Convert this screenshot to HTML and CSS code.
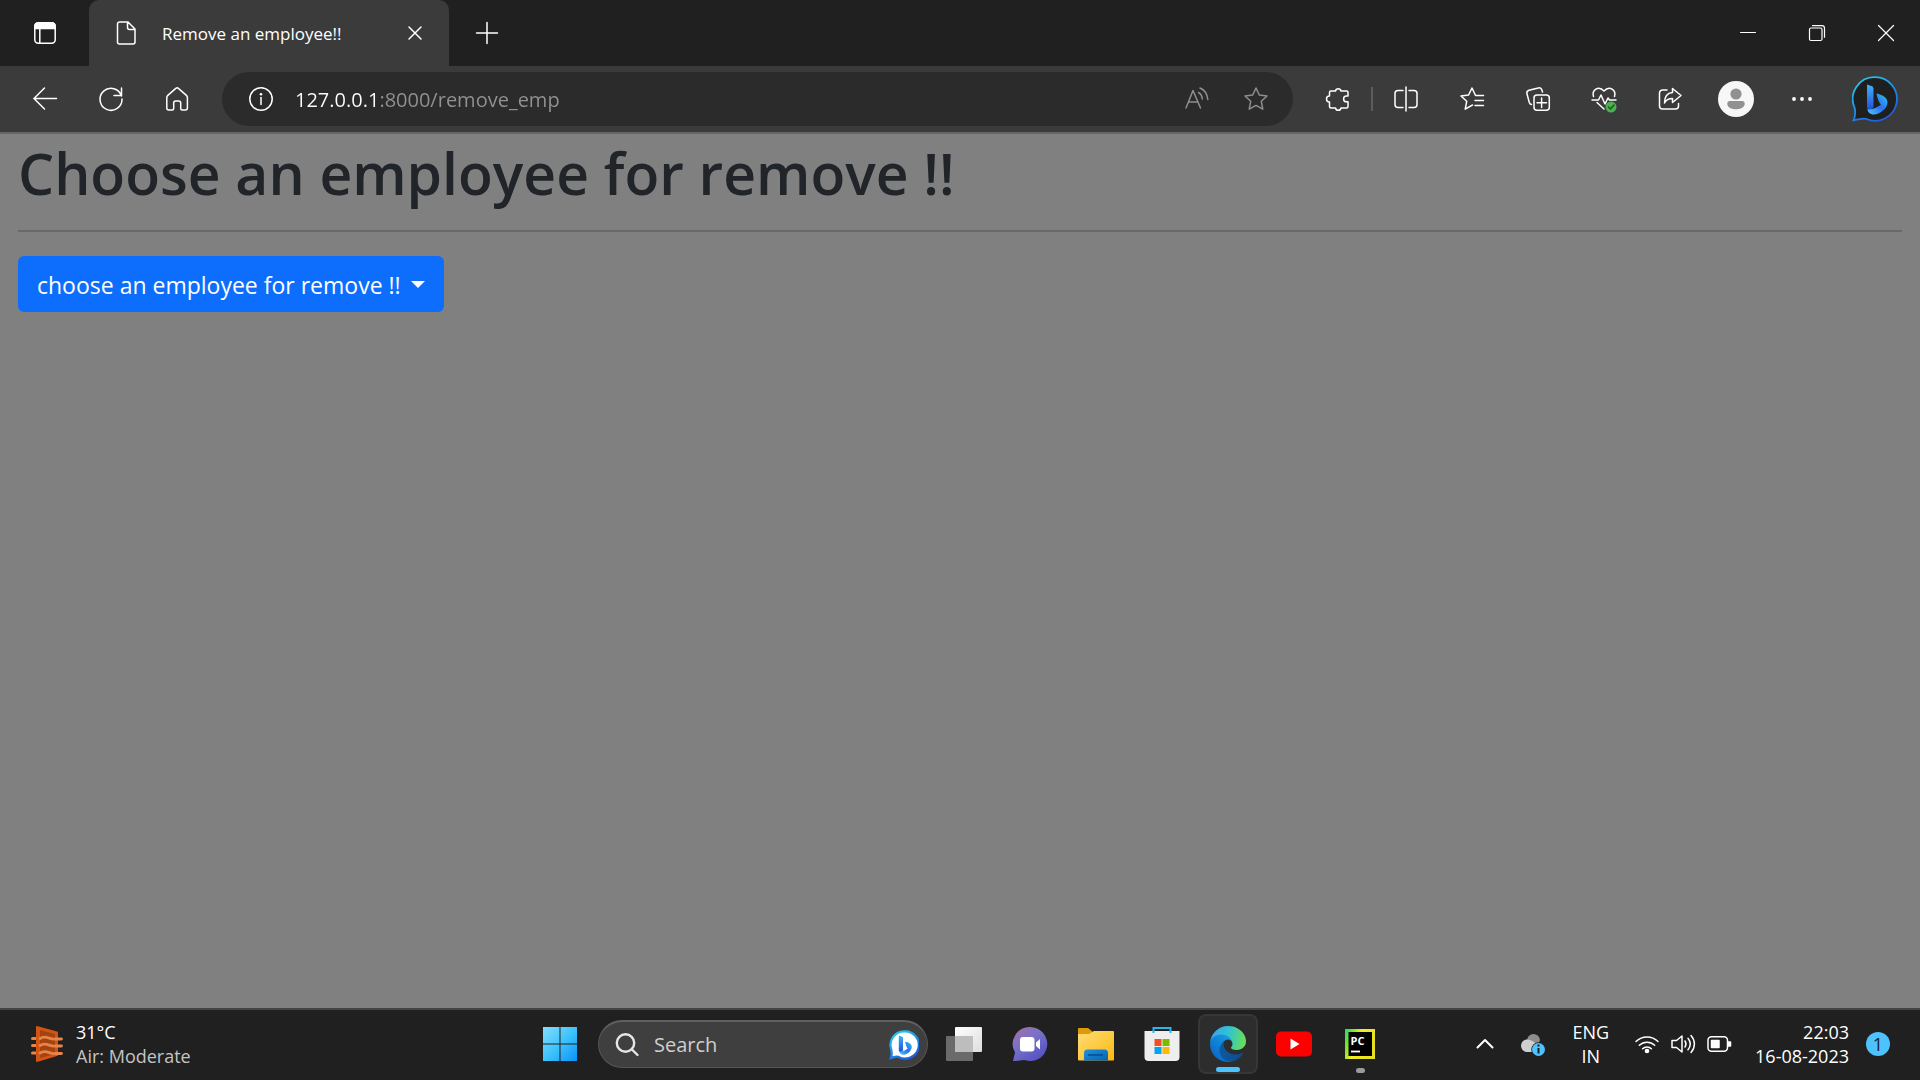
FILE: index.html
```html
<!DOCTYPE html>
<html lang="en">
<head>
<meta charset="utf-8">
<meta name="viewport" content="width=device-width, initial-scale=1">
<title>Remove an employee!!</title>
<link rel="stylesheet" href="styles.css">
</head>
<body>
<header class="browser">
  <div class="tab-strip">
    <button class="tab-actions" aria-label="Tab actions menu">
      <svg class="ico-24" viewBox="0 0 24 24"><rect x="1.800" y="1.800" width="20.400" height="20.400" rx="3.500"/><path class="solid" d="M2 7.500V5a3 3 0 0 1 3-3h14a3 3 0 0 1 3 3v2.500z"/><path d="M6.800 7v15"/></svg>
    </button>
    <div class="tab">
      <svg class="ico-24" viewBox="0 0 24 24"><path d="M5.500 1H14l7 7v13a2 2 0 0 1-2 2H5.500a2 2 0 0 1-2-2V3a2 2 0 0 1 2-2zM13.500 1v5.500a2 2 0 0 0 2 2H21"/></svg>
      <span class="tab-title">Remove an employee!!</span>
      <button class="tab-close" aria-label="Close tab"><svg class="ico-24" viewBox="0 0 24 24"><path d="M6 6l12 12M18 6L6 18"/></svg></button>
    </div>
    <button class="tab-new" aria-label="New tab"><svg class="ico-24" viewBox="0 0 24 24"><path d="M12 1.500v21M1.500 12h21"/></svg></button>
    <div class="window-controls">
      <button aria-label="Minimize"><svg class="ico-24 crisp" viewBox="0 0 24 24"><path d="M4.500 11.500h15"/></svg></button>
      <button aria-label="Restore"><svg class="ico-24 thin" viewBox="0 0 24 24"><rect x="4.500" y="7" width="12.500" height="12.500" rx="1.500"/><path d="M7.500 4.700h9.500a2.500 2.500 0 0 1 2.500 2.500v9"/></svg></button>
      <button aria-label="Close"><svg class="ico-24 thin" viewBox="0 0 24 24"><path d="M4.500 4.500l15 15M19.500 4.500l-15 15"/></svg></button>
    </div>
  </div>
  <nav class="toolbar" aria-label="Browser toolbar">
    <div class="tool-group">
      <button class="tool" aria-label="Back"><svg class="ico-24" viewBox="0 0 24 24"><path d="M23.500 11.500H.800M11.500 1L1 11.500 11.500 22"/></svg></button>
      <button class="tool" aria-label="Refresh"><svg class="ico-24" viewBox="0 0 24 24"><path d="M22.500 9A11 11 0 1 0 23 12M22.500 1v7.500H15"/></svg></button>
      <button class="tool" aria-label="Home"><svg class="ico-24" viewBox="0 0 24 24"><path d="M1.800 10.500a3 3 0 0 1 1-2.100l8-7a2 2 0 0 1 2.600 0l8 7a3 3 0 0 1 1 2.100V21a2 2 0 0 1-2 2h-3.200a1.500 1.500 0 0 1-1.500-1.500V16a2 2 0 0 0-2-2h-3a2 2 0 0 0-2 2v5.500A1.500 1.500 0 0 1 7.200 23H3.800a2 2 0 0 1-2-2z"/></svg></button>
    </div>
    <div class="address">
      <svg class="ico-24" viewBox="0 0 24 24"><circle cx="12" cy="12" r="11.200"/><path d="M12 10.500v7"/><circle class="solid-dot" cx="12" cy="7.300" r="1.300"/></svg>
      <input class="url" type="text" aria-label="Address" value="127.0.0.1:8000/remove_emp">
      <button class="muted" aria-label="Read aloud"><svg class="ico-24" viewBox="0 0 24 24"><path d="M1 21L8 3.500 15.500 21M3.500 15h9.500M13.500 5.500c2.200 1.200 3.500 3.200 3.800 6.500M15 1c4.500 1.800 7.200 5.500 7.800 11.500"/></svg></button>
      <button class="muted" aria-label="Add to favorites"><svg class="ico-24" viewBox="0 0 24 24"><path d="M12 1l3.300 7 7.700 1-5.700 5.300 1.500 7.900L12 18.400l-6.800 3.800 1.500-7.900L1 9l7.700-1z"/></svg></button>
    </div>
    <div class="tool-group">
      <button class="tool" aria-label="Extensions"><svg class="ico-24" viewBox="0 0 24 24"><path d="M3.500 5.500A1.500 1.500 0 0 1 5 4h4.500a2.800 2.800 0 0 1 5.500 0h5.500A1.500 1.500 0 0 1 22 5.500V9h-1.500a2.900 2.900 0 0 0 0 5.800H22v4.700a1.500 1.500 0 0 1-1.500 1.500H15a2.800 2.800 0 0 1-5.500 0H5a1.500 1.500 0 0 1-1.500-1.500V15a2.800 2.800 0 0 1 0-6z"/></svg></button>
      <span class="divider"></span>
      <button class="tool" aria-label="Split screen"><svg class="ico-24" viewBox="0 0 24 24"><path d="M12 0v24M9 3.500H4A3 3 0 0 0 1 6.500v11a3 3 0 0 0 3 3h5M15 3.500h5a3 3 0 0 1 3 3v11a3 3 0 0 1-3 3h-5"/></svg></button>
      <button class="tool" aria-label="Favorites"><svg class="ico-24" viewBox="0 0 24 24"><path d="M23.500 8.500h-8L12 1 8.600 8 1 9l5.700 5.300-1.500 7.900L12.500 18M15 13.500h8.500M15 18.500h8.500"/></svg></button>
      <button class="tool" aria-label="Collections"><svg class="ico-24" viewBox="0 0 24 24"><rect x="8" y="8" width="15.300" height="15.300" rx="3"/><path d="M15.600 11v9.500M11 15.700h9.500M16.500 5l-.6-2a3 3 0 0 0-3.700-2L3 3.300A3 3 0 0 0 1 7l2.300 8.500A3 3 0 0 0 5.500 17.500"/></svg></button>
      <button class="tool" aria-label="Browser essentials"><svg class="ico-24" viewBox="0 0 24 24"><path d="M1.500 9.500C-.5 3 6.500-2 12 4c5.500-6 12.500-1 10.500 5.500M0 13h6.500l2.500-5 4 9 3-6 1.500 2H24M5 15.500l7 6.500"/><circle class="ok" cx="19" cy="20" r="5.500"/><path class="tick" d="M16.500 20l2 2 3.500-4"/></svg></button>
      <button class="tool" aria-label="Share"><svg class="ico-24" viewBox="0 0 24 24"><path d="M9 3H4.500A3 3 0 0 0 1.500 6v13a3 3 0 0 0 3 3h13a3 3 0 0 0 3-3v-2.500M14.500 1.500L23 8.500l-8.500 7V11.500C10 11.500 8 13 6.500 16c0-6 2.500-10 8-10.500z"/></svg></button>
      <button class="tool" aria-label="Profile"><svg class="avatar" viewBox="0 0 36 36"><circle cx="18" cy="18" r="18" fill="#f7f7f7"/><circle cx="18" cy="13" r="5.600" fill="#919191"/><path d="M12 20h12a2.700 2.700 0 0 1 2.700 2.700c0 3.300-3.700 5.500-8.700 5.500s-8.700-2.200-8.700-5.500A2.700 2.700 0 0 1 12 20z" fill="#919191"/></svg></button>
      <button class="tool" aria-label="Settings and more"><svg class="ico-24" viewBox="0 0 24 24"><circle class="solid-dot" cx="4" cy="12" r="1.900"/><circle class="solid-dot" cx="12" cy="12" r="1.900"/><circle class="solid-dot" cx="20" cy="12" r="1.900"/></svg></button>
      <button class="tool copilot" aria-label="Discover"><svg class="bing" viewBox="0 0 46 46">
        <defs><linearGradient id="ring" x1="0" y1="0" x2=".6" y2="1"><stop offset="0" stop-color="#26d3ee"/><stop offset="1" stop-color="#1d5fe0"/></linearGradient>
        <linearGradient id="stem" x1="0" y1="0" x2="0" y2="1"><stop offset="0" stop-color="#3cb4fa"/><stop offset="1" stop-color="#2450dc"/></linearGradient>
        <linearGradient id="bowl" x1="1" y1="0" x2="0" y2="1"><stop offset="0" stop-color="#27c9e8"/><stop offset=".5" stop-color="#2c6ff0"/><stop offset="1" stop-color="#4ccbfb"/></linearGradient></defs>
        <path d="M23 1.200A21.800 21.800 0 1 1 14 42.800c-4-.8-8 1-12.500 1.500 2.500-5 1.800-9 1.200-12.300A21.800 21.800 0 0 1 23 1.200z" fill="#1f1f1f" stroke="url(#ring)" stroke-width="1.800"/>
        <path d="M24.500 17.500c5.500 1.500 11 3.500 11 9 0 6-8 12-13.500 12-4 0-6.500-2.500-6.500-5.500 5.500 1 9.500-1.500 13.500-4.500-2-1.500-4-7.500-4.500-11z" fill="url(#bowl)"/><path d="M15 8.500l4.500 1.500c1.500.5 2 1.500 2 3v18c-2 3-6.500 3-6.500 0z" fill="url(#stem)"/></svg></button>
    </div>
  </nav>
</header>

<main class="page">
  <h1>Choose an employee for remove !!</h1>
  <hr>
  <div class="dropdown">
    <select aria-label="Employee">
      <option>choose an employee for remove !!</option>
    </select>
    <svg class="caret" viewBox="0 0 14 7"><path d="M0 0h14L7 7z"/></svg>
  </div>
</main>

<footer class="taskbar">
  <button class="weather">
    <svg class="weather-icon" viewBox="0 0 32 38"><path d="M1.500 13.500H6M1.500 20.500H6M1.500 28H6" stroke="#e8834a" stroke-width="3" stroke-linecap="round"/><path d="M6 1l20 5.500a1 1 0 0 1 1 1V30a1 1 0 0 1-1 1L6 37a1 1 0 0 1-1-1V2a1 1 0 0 1 1-1z" fill="#d35413"/><path d="M9 5l15 4v20L9 33z" fill="#a54310"/><path d="M9 13.500c6-4 10 1.500 15 .5h6.500M9 20.500c6-4 10 1.500 15 .5h6.500M9 28c6-4 10 1.500 15 .5h6.500" fill="none" stroke="#e8834a" stroke-width="2.800" stroke-linecap="round"/></svg>
    <span class="two-line"><span>31°C</span><span class="dim">Air: Moderate</span></span>
  </button>

  <div class="apps">
    <button class="app" aria-label="Start"><svg class="app-icon" viewBox="0 0 36 36"><defs><linearGradient id="win" x1="0" y1="0" x2="1" y2="1"><stop offset="0" stop-color="#84dcff"/><stop offset=".5" stop-color="#3fc4fb"/><stop offset="1" stop-color="#0a93fa"/></linearGradient></defs><path d="M1 1h16.500v16.500H1zM18.500 1H35v16.500H18.500zM1 18.500h16.500V35H1zM18.500 18.500H35V35H18.500z" fill="url(#win)"/></svg></button>
    <label class="search">
      <svg class="ico-24 lens" viewBox="0 0 24 24"><circle cx="10.500" cy="10" r="8.700"/><path d="M17 16.500l5.500 5.500"/></svg>
      <input type="search" placeholder="Search" aria-label="Search">
      <svg class="bing-small" viewBox="0 0 46 46"><path d="M24 2A21 21 0 1 1 14 41c-4-1-7 1-11 2 2-5 1-9 .5-13A21 21 0 0 1 24 2z" fill="#fff" stroke="url(#ring)" stroke-width="3.500"/><path d="M25 17.500c5 1.500 10 3.500 10 8.500 0 6-8 12-13 12-4 0-6-2.500-6-5.500 5 1 9-1.500 13-4-2-1.500-4-8-4-11z" fill="url(#bowl)"/><path d="M15 8.500l4.500 1.500c1.500.5 2 1.500 2 3v18c-2 3-6.500 3-6.500 0z" fill="url(#stem)"/></svg>
    </label>
    <button class="app" aria-label="Task view"><svg class="app-icon" viewBox="0 0 36 36"><defs><linearGradient id="tv" x1="0" y1="0" x2="1" y2="1"><stop offset="0" stop-color="#fff"/><stop offset="1" stop-color="#ddd"/></linearGradient></defs><rect x="9" y="1" width="27" height="25" rx="1" fill="url(#tv)"/><rect y="10" width="27" height="25" rx="1" fill="#6a6a6a"/><path d="M9 10h18v16H9z" fill="#bdbdbd"/></svg></button>
    <button class="app" aria-label="Chat"><svg class="app-icon" viewBox="0 0 36 36"><defs><linearGradient id="chat" x1="0" y1="0" x2=".7" y2="1"><stop offset="0" stop-color="#a86f9e"/><stop offset=".45" stop-color="#7a72c8"/><stop offset="1" stop-color="#5552c4"/></linearGradient></defs><path d="M18 1a17 17 0 1 1-5.500 33c-4 .6-7.500 1-11.500 1l2-8.500A17 17 0 0 1 18 1z" fill="url(#chat)"/><rect x="8" y="11" width="14.500" height="14.500" rx="3" fill="#fff"/><path d="M24 16.500l4-3.500v10.500L24 20z" fill="#fff"/></svg></button>
    <button class="app" aria-label="File Explorer"><svg class="app-icon" viewBox="0 0 36 36"><defs><linearGradient id="fold" x1="0" y1="0" x2="1" y2="1"><stop offset="0" stop-color="#ffdc76"/><stop offset="1" stop-color="#fbb912"/></linearGradient><linearGradient id="drawer" x1="0" y1="0" x2="1" y2="1"><stop offset="0" stop-color="#1b94dc"/><stop offset="1" stop-color="#0761b5"/></linearGradient></defs><path d="M0 3a1 1 0 0 1 1-1h9l5 4v4H0z" fill="#dd9b06"/><path d="M0 8h11l5-3h19a1 1 0 0 1 1 1v27.500a1 1 0 0 1-1 1H1a1 1 0 0 1-1-1z" fill="url(#fold)"/><path d="M6 34.500V27a3.500 3.500 0 0 1 3.500-3.500h17A3.500 3.500 0 0 1 30 27v7.500z" fill="url(#drawer)"/><path d="M10 29h15" stroke="#084a8c" stroke-width="1.500"/></svg></button>
    <button class="app" aria-label="Microsoft Store"><svg class="app-icon" viewBox="0 0 36 36"><path d="M.5 5h35v26a4 4 0 0 1-4 4h-27a4 4 0 0 1-4-4z" fill="#eee"/><path d="M9.500 7V2h17v5" fill="none" stroke="#2ab4f0" stroke-width="2"/><path d="M10.500 13h7v7h-7z" fill="#f25022"/><path d="M18.500 13h7v7h-7z" fill="#7fba00"/><path d="M10.500 21h7v7h-7z" fill="#00a4ef"/><path d="M18.500 21h7v7h-7z" fill="#ffb900"/></svg></button>
    <button class="app active" aria-label="Microsoft Edge"><svg class="app-icon" viewBox="0 0 256 256"><defs><linearGradient id="ea" x1="63" y1="177" x2="241" y2="177" gradientUnits="userSpaceOnUse"><stop offset="0" stop-color="#0c59a4"/><stop offset="1" stop-color="#114a8b"/></linearGradient><linearGradient id="eb" x1="157" y1="98" x2="46" y2="219" gradientUnits="userSpaceOnUse"><stop offset="0" stop-color="#1b9de2"/><stop offset=".4" stop-color="#1287d8"/><stop offset="1" stop-color="#0b6cc8"/></linearGradient><linearGradient id="ec" x1="20" y1="60" x2="256" y2="100" gradientUnits="userSpaceOnUse"><stop offset="0" stop-color="#35a8e8"/><stop offset=".45" stop-color="#31c3d3"/><stop offset="1" stop-color="#6be04f"/></linearGradient></defs><path d="M231 190.500a93 93 0 0 1-10.500 4.700 102 102 0 0 1-35.900 6.400c-47.300 0-88.500-32.500-88.500-74.300a31.500 31.500 0 0 1 16.400-27.300c-42.800 1.800-53.800 46.400-53.800 72.500 0 74 68.100 81.400 82.800 81.400 7.900 0 19.800-2.300 27-4.600l1.300-.4a128 128 0 0 0 66.600-52.800 4 4 0 0 0-5.400-5.600z" fill="url(#ea)"/><path d="M105.700 241.400a79 79 0 0 1-22.700-21.300A80.700 80.700 0 0 1 112.500 100c3.100-1.500 8.500-4.100 15.600-4a32.400 32.400 0 0 1 25.700 13 32 32 0 0 1 6.300 18.700c0-.2 24.500-79.600-80-79.600C36.200 48.100.1 89.800.1 126.300a130 130 0 0 0 12.100 56 128 128 0 0 0 156.400 67 75.500 75.500 0 0 1-62.800-8z" fill="url(#eb)"/><path d="M152.300 148.900c-.8 1-3.300 2.500-3.300 5.700 0 2.600 1.700 5.100 4.700 7.200 14.400 10 41.500 8.700 41.600 8.700a59.600 59.600 0 0 0 30.300-8.300A61.400 61.400 0 0 0 256 109.200c.3-22.400-8-37.300-11.300-43.900C223.500 23.900 177.700 0 128 0A128 128 0 0 0 0 126.200c.5-36.500 36.800-66 80-66 3.500 0 23.500.3 42 10a72.600 72.600 0 0 1 30.900 29.300c6.100 10.600 7.200 24.100 7.200 29.500s-2.700 13.300-7.800 19.900z" fill="url(#ec)"/></svg><span class="indicator wide"></span></button>
    <button class="app" aria-label="YouTube"><svg class="app-icon" viewBox="0 0 36 36"><rect y="5.500" width="36" height="25" rx="5" fill="#f00"/><path d="M14.500 12.500v11l9-5.500z" fill="#fff"/></svg></button>
    <button class="app" aria-label="PyCharm"><svg class="app-icon" viewBox="0 0 36 36"><defs><linearGradient id="pc" x1="0" y1="0" x2="1" y2=".4"><stop offset="0" stop-color="#21d789"/><stop offset=".2" stop-color="#62e62c"/><stop offset=".5" stop-color="#f3ec25"/><stop offset="1" stop-color="#e6e021"/></linearGradient></defs><rect x="3" y="3" width="30" height="30" fill="url(#pc)"/><rect x="6.500" y="6" width="23.500" height="24" fill="#000"/><path d="M9 25.500h9" stroke="#fff" stroke-width="1.800"/><text x="8.500" y="18.500" class="pc-text">PC</text></svg><span class="indicator"></span></button>
  </div>

  <div class="tray">
    <button aria-label="Show hidden icons" class="tray-up"><svg class="ico-24 bold" viewBox="0 0 24 24"><path d="M4.500 15.500L12 8l7.500 7.500"/></svg></button>
    <button aria-label="OneDrive" class="tray-cloud"><svg class="ico-24" viewBox="0 0 24 24"><path class="flat" d="M6 9a6.500 6.500 0 0 1 13-1l-3 8H8z" fill="#8d8d8d"/><path class="flat" d="M5.500 7.500c3-.5 5 1 9 3.500l2 9H5.500a6.300 6.300 0 0 1 0-12.500z" fill="#cfcfcf"/><circle class="flat" cx="17.500" cy="17.500" r="7.200" fill="#1f1f1f"/><circle class="flat" cx="17.500" cy="17.500" r="6.500" fill="#4cc2ff"/><path class="info" d="M17.500 16v5.500M17.500 12.500v2"/></svg></button>
    <button class="language two-line"><span>ENG</span><span>IN</span></button>
    <button class="status" aria-label="Network, sound and battery">
      <svg class="ico-24" viewBox="0 0 24 24"><path d="M1 9.500a15.500 15.500 0 0 1 22 0M4.300 13.300a11 11 0 0 1 15.400 0M7.600 16.800a6.200 6.200 0 0 1 8.800 0"/><circle class="solid-dot" cx="12" cy="19" r="2.300"/></svg>
      <svg class="ico-24" viewBox="0 0 24 24"><path d="M1 8.500h4.500L11 4v16l-5.500-4.500H1zM14 9c1.300 2 1.300 4 0 6M17 6.300c2.800 3.500 2.800 8 0 11.500M20 3.500c4.500 5 4.500 12 0 17"/></svg>
      <svg class="ico-24" viewBox="0 0 24 24"><rect x="1" y="4.800" width="19.500" height="14.500" rx="3.500"/><path class="solid" d="M4.500 8.500h7.500v7H4.500zM21.500 10h2v4h-2z"/></svg>
    </button>
    <button class="clock two-line"><span>22:03</span><span>16-08-2023</span></button>
    <button class="badge" aria-label="1 notification">1</button>
  </div>
</footer>
</body>
</html>
```
FILE: styles.css
```css
* {
  box-sizing: border-box;
}

body {
  margin: 0;
  min-height: 100vh;
  display: flex;
  flex-direction: column;
  background: #808080;
  color: #fff;
  font-family: "Open Sans", "Noto Sans", sans-serif;
  font-size: 17px;
}

button,
input,
select {
  margin: 0;
  padding: 0;
  border: 0;
  background: none;
  color: inherit;
  font: inherit;
}

button {
  display: flex;
  align-items: center;
  justify-content: center;
}

svg {
  display: block;
  flex: none;
}

/* Line icons */
.ico-24 {
  width: 24px;
  height: 24px;
  overflow: visible;
  fill: none;
  stroke: currentColor;
  stroke-width: 1.5;
  stroke-linecap: round;
  stroke-linejoin: round;
}

.ico-24 .solid {
  fill: currentColor;
}

.ico-24 .solid-dot {
  fill: currentColor;
  stroke: none;
}

.ico-24 .flat {
  stroke: none;
}

.ico-24 .ok {
  fill: #4caf50;
  stroke: none;
}

.ico-24 .tick {
  stroke: #24562a;
}

.ico-24 .info {
  stroke: #1f1f1f;
  stroke-width: 2;
  stroke-linecap: butt;
}

.thin {
  stroke-width: 1.2;
}

.crisp {
  stroke-width: 1;
}

.bold {
  stroke-width: 2;
}

/* Browser frame */
.browser {
  background: #3b3b3b;
  border-bottom: 2px solid #666;
}

.tab-strip {
  display: flex;
  height: 66px;
  background: #202020;
}

.tab-actions {
  width: 89px;
}

.tab {
  display: flex;
  align-items: center;
  width: 360px;
  padding: 0 22px 0 25px;
  border-radius: 10px 10px 0 0;
  background: #3b3b3b;
}

.tab-title {
  flex: 1;
  padding-left: 24px;
}

.tab-new {
  width: 76px;
}

.window-controls {
  display: flex;
  margin-left: auto;
}

.window-controls button {
  width: 69px;
}

.toolbar {
  display: flex;
  align-items: center;
  gap: 12px;
  height: 66px;
  padding: 0 5px 0 12px;
}

.tool-group {
  display: flex;
  align-items: center;
}

.tool {
  width: 66px;
  height: 54px;
}

.copilot {
  width: 80px;
}

.divider {
  width: 2px;
  height: 24px;
  background: #5c5c5c;
}

.avatar {
  width: 36px;
  height: 36px;
}

.bing {
  width: 46px;
  height: 46px;
}

.address {
  display: flex;
  flex: 1;
  align-items: center;
  height: 54px;
  padding: 0 25px 0 27px;
  border-radius: 27px;
  background: #2b2b2b;
}

.url {
  flex: 1;
  min-width: 0;
  padding-left: 22px;
  font-size: 20px;
  background: linear-gradient(90deg, #fff 103px, #929292 103px);
  background-clip: text;
  -webkit-background-clip: text;
  color: transparent;
}

.muted {
  margin-left: 35px;
  color: #8f8f8f;
}

/* Web page */
.page {
  flex: 1;
  padding: 0 18px;
}

h1 {
  margin: 0;
  color: #212529;
  font-size: 57px;
  font-weight: 600;
  line-height: 78px;
}

hr {
  height: 2px;
  margin: 18px 0 24px;
  border: 0;
  background: #686969;
}

.dropdown {
  display: inline-grid;
  align-items: center;
}

.dropdown select {
  grid-area: 1 / 1;
  height: 56px;
  padding: 2px 43px 0 19px;
  border-radius: 6px;
  background: #0d6efd;
  font-size: 23px;
  appearance: none;
}

.caret {
  grid-area: 1 / 1;
  justify-self: end;
  width: 14px;
  height: 7px;
  margin-right: 19px;
  fill: #fff;
  pointer-events: none;
}

/* Taskbar */
.taskbar {
  display: grid;
  grid-template-columns: 1fr auto 1fr;
  align-items: center;
  height: 72px;
  box-shadow: inset 0 2px #444;
  background: #202020;
  font-size: 18px;
}

.two-line {
  display: flex;
  flex-direction: column;
  align-items: flex-start;
  line-height: 24px;
}

.weather {
  justify-self: start;
  gap: 13px;
  padding-left: 31px;
}

.weather-icon {
  width: 32px;
  height: 38px;
}

.dim {
  color: #c4c4c4;
}

.apps {
  display: flex;
  align-items: center;
}

.app {
  position: relative;
  width: 60px;
  height: 60px;
  margin: 0 3px;
  border-radius: 8px;
}

.app.active {
  border: 2px solid #363636;
  background: #2d2d2d;
}

.app-icon {
  width: 36px;
  height: 36px;
}

.pc-text {
  fill: #fff;
  font: 700 11px "Open Sans", sans-serif;
}

.indicator {
  position: absolute;
  bottom: 1px;
  width: 9px;
  height: 5px;
  border-radius: 3px;
  background: #9a9a9a;
}

.indicator.wide {
  bottom: 0;
  width: 24px;
  background: #4cc2ff;
}

.search {
  display: flex;
  align-items: center;
  width: 330px;
  height: 48px;
  margin: 0 3px 0 5px;
  padding: 0 8px 0 16px;
  border: 1px solid #555;
  border-top: 2px solid #606060;
  border-radius: 24px;
  background: #3f3f3f;
}

.search input {
  flex: 1;
  min-width: 0;
  padding-left: 15px;
  font-size: 20px;
}

.search input::placeholder {
  color: #cfcfcf;
  opacity: 1;
}

.lens {
  stroke: #e6e6e6;
  stroke-width: 2.4;
}

.bing-small {
  width: 30px;
  height: 30px;
}

.tray {
  display: flex;
  align-items: center;
  justify-content: flex-end;
  padding-right: 30px;
}

.tray-cloud {
  margin: 0 27px 0 24px;
}

.language {
  align-items: center;
  margin-right: 26px;
}

.status {
  gap: 12px;
  margin-right: 24px;
}

.clock {
  align-items: flex-end;
  margin-right: 17px;
}

.badge {
  width: 24px;
  height: 24px;
  border-radius: 50%;
  background: #4cc2ff;
  color: #1f1f1f;
}
```
